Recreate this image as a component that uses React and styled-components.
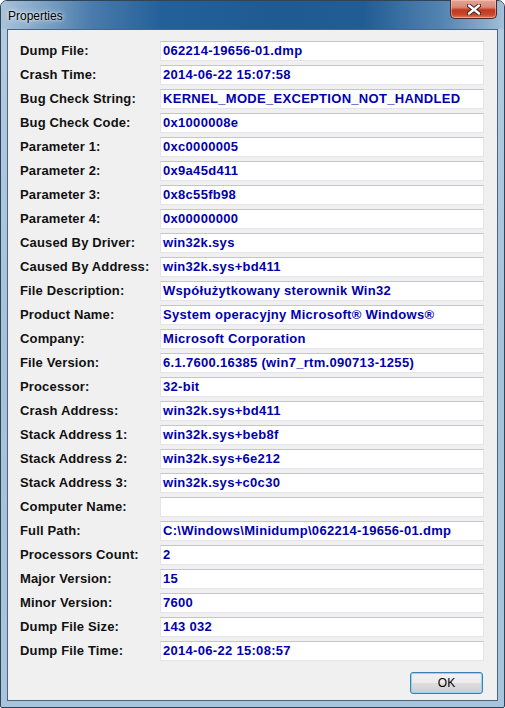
import React from "react";
import styled, { createGlobalStyle } from "styled-components";

const GlobalStyle = createGlobalStyle`
  html, body {
    margin: 0;
    padding: 0;
    overflow: hidden;
    background: #ffffff;
  }
  * { box-sizing: border-box; }
`;

const Window = styled.div`
  width: 505px;
  height: 708px;
  display: flex;
  flex-direction: column;
  border: 1px solid #2f4459;
  border-radius: 7px 7px 2px 2px;
  background: linear-gradient(to bottom, #b4cce1 0%, #a6c1da 50%, #a9c4dd 100%);
  font-family: "Liberation Sans", Arial, sans-serif;
`;

const TitleBar = styled.div`
  height: 28px;
  display: flex;
  justify-content: space-between;
  align-items: flex-start;
  padding-left: 7px;
  padding-right: 7px;
  border-radius: 6px 6px 0 0;
  background: linear-gradient(
    to right,
    #a9c3da 0%,
    #8aaccb 6%,
    #4a7bab 18%,
    #23609a 32%,
    #1f5a92 55%,
    #215c94 72%,
    #5585b1 88%,
    #86a9c9 96%,
    #a4bfd8 100%
  );
`;

const Title = styled.span`
  font-size: 12px;
  color: #000;
  line-height: 14px;
  padding-top: 8px;
  text-shadow: 0 0 6px rgba(255, 255, 255, 0.9), 0 0 3px rgba(255, 255, 255, 0.9);
`;

const CloseButton = styled.div`
  width: 47px;
  height: 19px;
  margin-top: -1px;
  display: flex;
  align-items: center;
  justify-content: center;
  border: 1px solid #4a2a27;
  border-top: none;
  border-radius: 0 0 5px 5px;
  background: linear-gradient(
    to bottom,
    #e6a594 0%,
    #d88a78 40%,
    #c2381f 55%,
    #c9452a 80%,
    #e07a56 100%
  );
  box-shadow: inset 0 0 0 1px rgba(255, 220, 210, 0.45);
`;

const Client = styled.div`
  flex: 1;
  margin: 0 6px 6px 6px;
  border: 1px solid #4b6580;
  background: #f0f0f0;
  padding: 11px 13px 0 12px;
  display: flex;
  flex-direction: column;
`;

const Grid = styled.div`
  display: grid;
  grid-template-columns: 140px 324px;
  grid-auto-rows: 20px;
  row-gap: 4px;
`;

const Label = styled.div`
  font-size: 13px;
  font-weight: bold;
  letter-spacing: 0.15px;
  color: #111;
  line-height: 20px;
  white-space: nowrap;
`;

const Field = styled.div`
  background: #ffffff;
  border: 1px solid #e3e4e9;
  border-top-color: #c4c6cc;
  padding-left: 2px;
  font-size: 13px;
  font-weight: bold;
  letter-spacing: 0.3px;
  color: #0000b0;
  line-height: 18px;
  white-space: nowrap;
  overflow: hidden;
`;

const Footer = styled.div`
  display: flex;
  justify-content: flex-end;
  margin-top: 11px;
  padding-right: 1px;
`;

const Button = styled.div`
  width: 73px;
  height: 22px;
  display: flex;
  align-items: center;
  justify-content: center;
  border: 1px solid #3c7fb1;
  border-radius: 3px;
  background: linear-gradient(
    to bottom,
    #f2f2f2 0%,
    #ebebeb 48%,
    #dddddd 52%,
    #cfcfcf 100%
  );
  box-shadow: inset 0 0 0 1px #8fd6f5;
  font-size: 12px;
  color: #000;
`;

const rows = [
  ["Dump File:", "062214-19656-01.dmp"],
  ["Crash Time:", "2014-06-22 15:07:58"],
  ["Bug Check String:", "KERNEL_MODE_EXCEPTION_NOT_HANDLED"],
  ["Bug Check Code:", "0x1000008e"],
  ["Parameter 1:", "0xc0000005"],
  ["Parameter 2:", "0x9a45d411"],
  ["Parameter 3:", "0x8c55fb98"],
  ["Parameter 4:", "0x00000000"],
  ["Caused By Driver:", "win32k.sys"],
  ["Caused By Address:", "win32k.sys+bd411"],
  ["File Description:", "Współużytkowany sterownik Win32"],
  ["Product Name:", "System operacyjny Microsoft® Windows®"],
  ["Company:", "Microsoft Corporation"],
  ["File Version:", "6.1.7600.16385 (win7_rtm.090713-1255)"],
  ["Processor:", "32-bit"],
  ["Crash Address:", "win32k.sys+bd411"],
  ["Stack Address 1:", "win32k.sys+beb8f"],
  ["Stack Address 2:", "win32k.sys+6e212"],
  ["Stack Address 3:", "win32k.sys+c0c30"],
  ["Computer Name:", ""],
  ["Full Path:", "C:\\Windows\\Minidump\\062214-19656-01.dmp"],
  ["Processors Count:", "2"],
  ["Major Version:", "15"],
  ["Minor Version:", "7600"],
  ["Dump File Size:", "143 032"],
  ["Dump File Time:", "2014-06-22 15:08:57"],
];

const CloseIcon = () => (
  <svg width="14" height="11" viewBox="0 0 14 11">
    <path
      d="M2 1.5 L12 9.5 M12 1.5 L2 9.5"
      stroke="#3a1a16"
      strokeWidth="4.2"
      strokeLinecap="round"
    />
    <path
      d="M2 1.5 L12 9.5 M12 1.5 L2 9.5"
      stroke="#ffffff"
      strokeWidth="2.4"
      strokeLinecap="round"
    />
  </svg>
);

const App = () => {
  return (
    <>
      <GlobalStyle />
      <Window>
        <TitleBar>
          <Title>Properties</Title>
          <CloseButton>
            <CloseIcon />
          </CloseButton>
        </TitleBar>
        <Client>
          <Grid>
            {rows.map(([label, value]) => (
              <React.Fragment key={label}>
                <Label>{label}</Label>
                <Field>{value}</Field>
              </React.Fragment>
            ))}
          </Grid>
          <Footer>
            <Button>OK</Button>
          </Footer>
        </Client>
      </Window>
    </>
  );
};

export default App;
